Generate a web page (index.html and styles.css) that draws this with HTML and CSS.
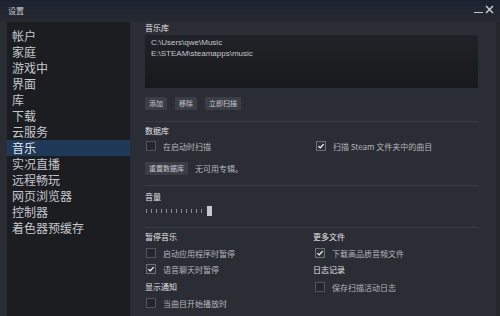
FILE: index.html
```html
<!DOCTYPE html>
<html>
<head>
    <link rel="stylesheet" href="styles.css">
</head>
<body>
    <div class="window">
        <!-- Title bar -->
        <div class="titlebar">
            <span class="title">设置</span>
            <div class="controls">
                <span class="min"></span>
                <svg class="close" width="9" height="9" viewBox="0 0 9 9">
                    <path d="M1 1L8 8M8 1L1 8" stroke="#d0d3d8" stroke-width="1.4"/>
                </svg>
            </div>
        </div>

        <div class="main">
            <!-- Sidebar -->
            <ul class="sidebar">
                <li>帐户</li>
                <li>家庭</li>
                <li>游戏中</li>
                <li>界面</li>
                <li>库</li>
                <li>下载</li>
                <li>云服务</li>
                <li class="active">音乐</li>
                <li>实况直播</li>
                <li>远程畅玩</li>
                <li>网页浏览器</li>
                <li>控制器</li>
                <li>着色器预缓存</li>
            </ul>

            <!-- Content -->
            <div class="content">
                <div class="label first">音乐库</div>
                <div class="listbox">
                    <div>C:\Users\qwe\Music</div>
                    <div>E:\STEAM\steamapps\music</div>
                </div>
                <div class="buttons">
                    <button>添加</button>
                    <button>移除</button>
                    <button>立即扫描</button>
                </div>

                <div class="sep sep1"></div>
                <div class="label db">数据库</div>
                <div class="cols db-row">
                    <div class="check"><span class="box"></span>在启动时扫描</div>
                    <div class="check right"><span class="box on"></span>扫描 Steam 文件夹中的曲目</div>
                </div>
                <div class="reset-row">
                    <button>重置数据库</button>
                    <span class="note">无可用专辑。</span>
                </div>

                <div class="sep sep2"></div>
                <div class="label vol">音量</div>
                <div class="slider">
                    <span class="tick"></span><span class="tick"></span><span class="tick"></span>
                    <span class="tick"></span><span class="tick"></span><span class="tick"></span>
                    <span class="tick"></span><span class="tick"></span><span class="tick"></span>
                    <span class="tick"></span><span class="tick"></span><span class="tick"></span>
                    <span class="handle"></span>
                </div>

                <div class="sep sep3"></div>
                <div class="cols bottom">
                    <div class="col">
                        <div class="label head">暂停音乐</div>
                        <div class="check c1"><span class="box"></span>启动应用程序时暂停</div>
                        <div class="check c2"><span class="box on"></span>语音聊天时暂停</div>
                        <div class="label notify">显示通知</div>
                        <div class="check c2"><span class="box"></span>当曲目开始播放时</div>
                    </div>
                    <div class="col">
                        <div class="label head">更多文件</div>
                        <div class="check c1 rc"><span class="box on"></span>下载高品质音频文件</div>
                        <div class="label log">日志记录</div>
                        <div class="check c3 rc"><span class="box"></span>保存扫描活动日志</div>
                    </div>
                </div>
            </div>
            <div class="edge"></div>
        </div>
    </div>
</body>
</html>
```

FILE: styles.css
```css
body {
    margin: 0;
    width: 500px;
    height: 316px;
    overflow: hidden;
    background-color: #2a2d33;
    font-family: "Noto Sans CJK SC", "Liberation Sans", sans-serif;
}

.window {
    display: flex;
    flex-direction: column;
    height: 316px;
}

/* Title bar */
.titlebar {
    display: flex;
    justify-content: space-between;
    align-items: center;
    height: 22px;
    padding: 0 6px 0 8px;
    background: linear-gradient(to bottom, #1c2330, #272a31);
}

.title {
    font-size: 8px;
    color: #c9ccd1;
    margin-top: -2px;
}

.controls {
    display: flex;
    align-items: center;
    gap: 2px;
    margin-top: -4px;
}

.min {
    width: 9px;
    height: 1px;
    margin-top: 6px;
    background-color: #c0c3c8;
}

/* Main */
.main {
    display: flex;
    flex: 1;
}

.sidebar {
    list-style: none;
    margin: 0 0 0 7px;
    padding: 6px 0 0 0;
    width: 123px;
    background-color: #1b1d21;
}

.sidebar li {
    height: 16px;
    line-height: 16px;
    padding-left: 5px;
    font-size: 12px;
    color: #c4c7cc;
}

.sidebar li.active {
    background-color: #1e3a58;
    color: #e6e9ee;
}

.content {
    flex: 1;
    padding: 1px 18px 0 15px;
}

.edge {
    width: 4px;
    background-color: #24272c;
}

.label {
    height: 10px;
    line-height: 10px;
    font-size: 8px;
    color: #e2e4e8;
}

.listbox {
    margin-top: 2px;
    height: 51px;
    padding: 2px 0 0 6px;
    background: linear-gradient(to bottom, #202227, #17191c);
    font-family: "Liberation Sans", sans-serif;
    font-size: 8px;
    line-height: 11px;
    color: #c4c7cc;
}

.buttons {
    display: flex;
    gap: 8px;
    margin-top: 9px;
}

button {
    height: 13px;
    padding: 0 4px;
    border: none;
    border-radius: 1px;
    background-color: #3b3e46;
    color: #c4c7cc;
    font-family: "Noto Sans CJK SC", sans-serif;
    font-size: 7px;
    line-height: 13px;
}

.sep {
    height: 1px;
    background-color: #393c43;
}

.sep1 { margin-top: 11px; }
.sep2 { margin-top: 10px; }
.sep3 { margin-top: 11px; }

.db { margin-top: 4px; }
.vol { margin-top: 6px; }

.cols {
    display: grid;
    grid-template-columns: 168px 1fr;
}

.db-row { margin-top: 5px; }

.check {
    display: flex;
    align-items: center;
    gap: 7px;
    height: 10px;
    padding-left: 1px;
    font-size: 8px;
    color: #b3b6bc;
}

.check.right { padding-left: 3px; }
.check.rc { padding-left: 2px; }

.box {
    box-sizing: border-box;
    width: 10px;
    height: 10px;
    border: 1px solid #50545b;
    background-color: #23262b;
}

.box.on {
    background-color: #2f3238;
    border-color: #6a6e75;
    background-image: url("data:image/svg+xml,%3Csvg xmlns='http://www.w3.org/2000/svg' viewBox='0 0 10 10'%3E%3Cpath d='M1.8 5.2L4 7.3L8.3 2.6' fill='none' stroke='white' stroke-width='1.6'/%3E%3C/svg%3E");
    background-size: 100% 100%;
}

.reset-row {
    display: flex;
    align-items: center;
    gap: 7px;
    margin-top: 11px;
}

.note {
    font-size: 8px;
    color: #b3b6bc;
}

.slider {
    display: flex;
    align-items: center;
    gap: 4px;
    height: 10px;
    margin-top: 4px;
    padding-left: 1px;
}

.tick {
    width: 1px;
    height: 4px;
    background-color: #8a8e95;
}

.handle {
    width: 5px;
    height: 10px;
    margin-left: 1px;
    background-color: #c4c7cc;
}

.bottom { margin-top: 4px; }

.c1 { margin-top: 6px; }
.c2 { margin-top: 6px; }
.c3 { margin-top: 7px; }

.notify { margin-top: 8px; }
.log { margin-top: 7px; }
```
